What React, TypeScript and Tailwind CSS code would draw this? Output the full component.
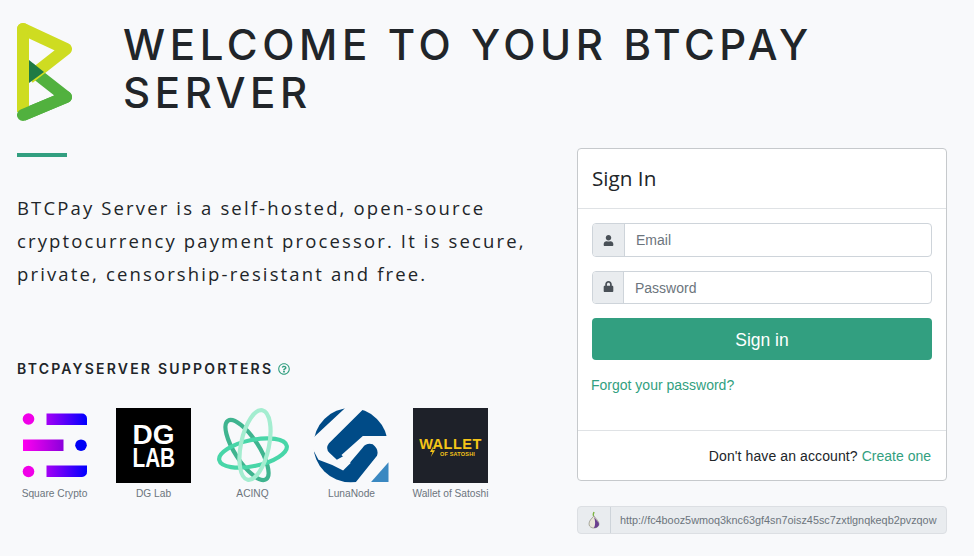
import { FaUser, FaLock, FaRegQuestionCircle } from "react-icons/fa";

function Logo() {
  return (
    <svg width="56" height="100" viewBox="0 0 56 100" className="block shrink-0">
      <path d="M12 46 L49 75 L6 93" fill="none" stroke="#51b13e" strokeWidth="12" strokeLinejoin="round" />
      <path d="M6 90 L6 7 L49 27 L12 56" fill="none" stroke="#cedc21" strokeWidth="12" strokeLinejoin="round" />
      <circle cx="6" cy="7" r="6" fill="#cedc21" />
      <path d="M49 75 L6 93" fill="none" stroke="#51b13e" strokeWidth="12" strokeLinecap="round" />
      <path d="M12 38 L27 50 L12 61 Z" fill="#1e7a44" />
    </svg>
  );
}

function SquareCrypto() {
  return (
    <svg width="75" height="75" viewBox="0 0 75 75" className="block">
      <defs>
        <linearGradient id="g1" x1="0" x2="1" y1="0" y2="0">
          <stop offset="0" stopColor="#a400f5" />
          <stop offset="1" stopColor="#0000ff" />
        </linearGradient>
        <linearGradient id="g2" x1="0" x2="1" y1="0" y2="0">
          <stop offset="0" stopColor="#ff00f0" />
          <stop offset="1" stopColor="#8a00dc" />
        </linearGradient>
      </defs>
      <circle cx="11.500" cy="11" r="5.800" fill="#f000e8" />
      <path d="M29.500 5.500 H65 A5 5 0 0 1 70 10.500 V17 H29.500 Z" fill="url(#g1)" />
      <rect x="6" y="31.500" width="40.500" height="11.500" fill="url(#g2)" />
      <circle cx="64" cy="37.200" r="5.800" fill="#0000f5" />
      <circle cx="11.500" cy="63.500" r="5.800" fill="#f000e8" />
      <path d="M29.500 57.500 H70 V63.500 A5 5 0 0 1 65 69 H29.500 Z" fill="url(#g1)" />
    </svg>
  );
}

function DgLab() {
  return (
    <div className="w-[75px] h-[75px] bg-black flex flex-col items-center justify-center text-white font-['Liberation_Sans',sans-serif] font-bold overflow-hidden">
      <div className="text-[28px] leading-[23px]">DG</div>
      <div className="text-[28px] leading-[23px] scale-x-[0.74]">LAB</div>
    </div>
  );
}

function Acinq() {
  return (
    <svg width="75" height="75" viewBox="0 0 75 75" className="block">
      <g fill="none" strokeWidth="4.200">
        <ellipse cx="32" cy="42" rx="35" ry="12" transform="rotate(57 32 42)" stroke="#3fb48f" />
        <ellipse cx="38" cy="45" rx="34.500" ry="13" transform="rotate(-12 38 45)" stroke="#48d6a8" />
        <ellipse cx="40" cy="37" rx="35.500" ry="14" transform="rotate(102 40 37)" stroke="#a4edd0" />
      </g>
    </svg>
  );
}

function LunaNode() {
  const bg = "#f8f9fb";
  return (
    <svg width="76" height="75" viewBox="15 15 228 228" className="block -ml-[1px]">
      <circle cx="128" cy="128" r="113" fill="#004b87" />
      <path d="M122 5 L170 15 L62 122 Q50 138 64 152 L86 172 L108 160 L128 182 L105 205 Q70 185 30 172 L5 125 L15 105 Z" fill={bg} />
      <path d="M100 158 L165 100 L250 100 L250 175 L188 245 L140 245 L208 160 Q215 140 195 125 Q175 120 165 135 L125 182 Z" fill={bg} />
      <path d="M190 240 L243 180 L243 240 Z" fill="#3a88c1" />
    </svg>
  );
}

function Wallet() {
  return (
    <div className="relative w-[75px] h-[75px] bg-[#1e2129] flex flex-col items-center justify-center text-[#f5c518] font-['Liberation_Sans',sans-serif] font-bold pt-[2px]">
      <div className="text-[14.500px] leading-[14px] tracking-[0.5px]">WALLET</div>
      <div className="text-[5.500px] leading-[6px] tracking-[0.2px] ml-[14px]">OF SATOSHI</div>
      <svg width="7" height="11" viewBox="0 0 8 13" className="absolute left-[16px] top-[38px]">
        <path d="M5 0 L1 7 L4 7 L2 13 L7 5 L4 5 Z" fill="#f5c518" />
      </svg>
    </div>
  );
}

function Tor() {
  return (
    <svg width="16" height="18" viewBox="0 0 16 18" className="block">
      <path d="M8 1 C7 3 7 4 7.500 5" stroke="#7cb342" strokeWidth="1.500" fill="none" />
      <path d="M8 5 C5 8 3 10 3 13 C3 16 6 17 8 17 C11 17 13 15 13 13 C13 10 10 8 8 5 Z" fill="#e9e6d8" stroke="#6b6b5a" strokeWidth="0.500" />
      <path d="M8 6 C10 9 13 11 13 13 C13 15.500 10.500 17 8 17 C9.500 14 9.500 10 8 6 Z" fill="#6a3f8f" />
    </svg>
  );
}

const supporters: [string, React.ReactNode][] = [
  ["Square Crypto", <SquareCrypto />],
  ["DG Lab", <DgLab />],
  ["ACINQ", <Acinq />],
  ["LunaNode", <LunaNode />],
  ["Wallet of Satoshi", <Wallet />],
];

export default function App() {
  return (
    <div className="w-[974px] h-[556px] overflow-hidden bg-[#f8f9fb] pt-[22px] pl-[17px] pr-[27px] text-[#212529] font-['Liberation_Sans',sans-serif]">
      <div className="flex items-start">
        <Logo />
        <h1 className="ml-[50px] mt-[-1px] text-[42px] leading-[48px] font-medium tracking-[4.6px] uppercase font-['Inter',sans-serif] w-[760px]">
          Welcome to your BTCPay Server
        </h1>
      </div>
      <div className="flex mt-[26px]">
        <div className="w-[560px] pt-[5px]">
          <div className="w-[50px] h-[4px] bg-[#329f80]" />
          <p className="mt-[34px] text-[18.500px] leading-[33px] tracking-[2.14px] font-['Open_Sans',sans-serif] w-[530px]">
            BTCPay Server is a self-hosted, open-source cryptocurrency payment processor. It is secure, private, censorship-resistant and free.
          </p>
          <div className="mt-[70px] flex items-center gap-[5px]">
            <h5 className="text-[14px] leading-[18px] font-semibold tracking-[2.2px] font-['Inter',sans-serif]">BTCPAYSERVER SUPPORTERS</h5>
            <FaRegQuestionCircle className="text-[#329f80] text-[12px]" />
          </div>
          <div className="mt-[30px] flex gap-[24px]">
            {supporters.map(([name, logo]) => (
              <div key={name} className="w-[75px] flex flex-col items-center">
                {logo}
                <span className="mt-[4px] text-[10.200px] leading-[14px] whitespace-nowrap text-[#6c757d]">{name}</span>
              </div>
            ))}
          </div>
        </div>
        <div className="w-[370px]">
          <div className="h-[333px] bg-white border border-[#c6c9cc] rounded-[4px] flex flex-col">
            <div className="h-[60px] border-b border-[#dfe2e5] pl-[14px] pr-[14px] pb-[2px] flex items-center">
              <h2 className="text-[20.700px] font-normal font-['Open_Sans',sans-serif] leading-[24px]">Sign In</h2>
            </div>
            <div className="px-[14px] pt-[14px] flex-1">
              <div className="flex h-[34px] border border-[#ced4da] rounded-[4px] overflow-hidden">
                <div className="w-[32px] bg-[#e9ecef] border-r border-[#ced4da] flex items-center justify-center text-[#495057]">
                  <FaUser className="text-[11px]" />
                </div>
                <div className="flex-1 pl-[11px] flex items-center text-[14px] text-[#6c757d]">Email</div>
              </div>
              <div className="flex h-[33px] mt-[14px] border border-[#ced4da] rounded-[4px] overflow-hidden">
                <div className="w-[31px] bg-[#e9ecef] border-r border-[#ced4da] flex items-center justify-center text-[#495057]">
                  <FaLock className="text-[11px] mb-[2px]" />
                </div>
                <div className="flex-1 pl-[11px] pt-[2px] flex items-center text-[14px] text-[#6c757d]">Password</div>
              </div>
              <button className="mt-[14px] w-full h-[42px] pt-[2px] rounded-[4px] bg-[#329f80] text-white text-[17.500px] font-normal">Sign in</button>
              <div className="mt-[17px] ml-[-1px] text-[14px] leading-[16px] text-[#329f80]">Forgot your password?</div>
            </div>
            <div className="h-[50px] border-t border-[#dfe2e5] pl-[14px] pr-[15px] pt-[1px] flex items-center justify-end text-[14px] tracking-[0.1px]">
              <span>Don't have an account?&nbsp;</span>
              <span className="text-[#329f80] tracking-normal">Create one</span>
            </div>
          </div>
          <div className="mt-[25px] h-[28px] flex bg-[#e9ecef] border border-[#dcdfe3] rounded-[4px] overflow-hidden">
            <div className="w-[33px] border-r border-[#ced4da] flex items-center justify-center"><Tor /></div>
            <div className="flex-1 pl-[9px] flex items-center text-[10.850px] text-[#6c757d] whitespace-nowrap overflow-hidden">http://fc4booz5wmoq3knc63gf4sn7oisz45sc7zxtlgnqkeqb2pvzqow</div>
          </div>
        </div>
      </div>
    </div>
  );
}
